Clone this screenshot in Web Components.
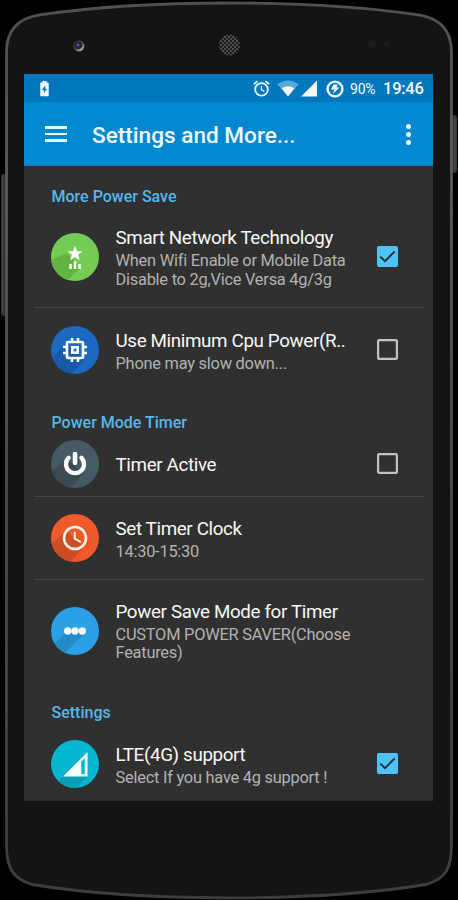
<!DOCTYPE html>
<html lang="en">
<head>
<meta charset="utf-8">
<title>Settings and More</title>
<style>
html,body{margin:0;padding:0;background:#000;width:458px;height:900px;overflow:hidden;font-family:Roboto,"Liberation Sans",sans-serif}
</style>
</head>
<body>
<phone-shell>
  <status-bar></status-bar>
  <app-bar>Settings and More...</app-bar>
  <section-title style="height:41px;--pt:10px">More Power Save</section-title>
  <setting-row icon="network" check="on" line="1" style="height:101px"><span>Smart Network Technology</span><span slot="sum">When Wifi Enable or Mobile Data<br>Disable to 2g,Vice Versa 4g/3g</span></setting-row>
  <setting-row icon="cpu" check="off" style="height:84px"><span>Use Minimum Cpu Power(R..</span><span slot="sum">Phone may slow down...</span></setting-row>
  <section-title style="height:40px;--pt:10px">Power Mode Timer</section-title>
  <setting-row icon="power" check="off" line="1" style="height:65px"><span>Timer Active</span></setting-row>
  <setting-row icon="clock" line="1" style="height:83px"><span>Set Timer Clock</span><span slot="sum">14:30-15:30</span></setting-row>
  <setting-row icon="dots" style="height:101px"><span>Power Save Mode for Timer</span><span slot="sum">CUSTOM POWER SAVER(Choose<br>Features)</span></setting-row>
  <section-title style="height:45px;--pt:11px">Settings</section-title>
  <setting-row icon="lte" check="on" style="height:76px"><span>LTE(4G) support</span><span slot="sum">Select If you have 4g support !</span></setting-row>
</phone-shell>
<script>
const define = (name, html) => customElements.define(name, class extends HTMLElement {
  connectedCallback() {
    if (this.shadowRoot) return;
    const root = this.attachShadow({ mode: 'open' });
    root.innerHTML = typeof html === 'function' ? html(this) : html;
  }
});

const body = 'M6.5 170V52C6.5 32 17 19 38 15.2C96 6.500 160 3 229 3C298 3 362 6.500 420 15.200C441 19 451.500 32 451.500 52V845C451.500 868 446 879 426 884.500C368 894 300 897.800 229 897.800C158 897.800 90 894 32 884.500C13 879 6.500 868 6.500 845Z';

define('phone-shell', `<style>
:host{display:block;position:relative;width:458px;height:900px;box-sizing:border-box;padding:74px 25px 99px 24px}
.frame{position:absolute;inset:0}
.screen{position:relative;width:409px;height:727px;background:#303030;overflow:hidden;display:flex;flex-direction:column}
::slotted(*){flex:none}
</style>
<svg class="frame" width="458" height="900" viewBox="0 0 458 900">
<defs>
<pattern id="g" width="4" height="4" patternUnits="userSpaceOnUse"><rect width="4" height="4" fill="#1c1c1c"/><circle cx="1" cy="1" r="1.050" fill="#575757"/><circle cx="3" cy="3" r="1.050" fill="#575757"/></pattern>
<linearGradient id="e" x2="0" y2="1"><stop offset="0" stop-color="#505050"/><stop offset=".2" stop-color="#5a5a5a"/><stop offset=".6" stop-color="#484848"/><stop offset="1" stop-color="#3e3e3e"/></linearGradient>
<radialGradient id="c" cx=".65" cy=".7"><stop offset="0" stop-color="#bbb"/><stop offset="1" stop-color="#555"/></radialGradient>
</defs>
<rect x="1" y="174" width="5" height="142" rx="2" fill="#303030"/><rect x="2" y="176" width="1.500" height="138" fill="#454545"/>
<rect x="452" y="115" width="5" height="58" rx="2" fill="#333"/><rect x="454" y="117" width="1.500" height="54" fill="#484848"/>
<path d="${body}" fill="#141414" stroke="url(#e)" stroke-width="2.800"/>
<circle cx="79" cy="46" r="5.500" fill="url(#c)"/><circle cx="78.300" cy="45.300" r="4" fill="#22203a"/><circle cx="78" cy="45" r="1.500" fill="#5a58a0"/>
<circle cx="229.500" cy="45" r="10.500" fill="url(#g)"/>
<circle cx="372" cy="44" r="4" fill="#1d1b1b"/><circle cx="386.500" cy="44" r="2.500" fill="#221d1d"/>
</svg>
<div class="screen"><slot></slot></div>`);

define('status-bar', `<style>
:host{display:flex;align-items:center;height:28px;background:#0277bd;color:#f4fbff;box-sizing:border-box;padding:1px 9px 0 16px}
svg{display:block;flex:none}
.sp{flex:1}
.p{font-size:14px;line-height:28px;width:25px;margin-left:6px;white-space:nowrap;letter-spacing:-.200px}
.t{font-size:16.500px;font-weight:500;line-height:28px;width:41px;margin-left:8px;white-space:nowrap;letter-spacing:-.250px}
</style>
<svg width="9" height="16" viewBox="0 0 9 16"><path fill="#f4fbff" d="M2.500 0h4v1.500H8q.7 0 .7.700v12.300q0 .8-.7.800H1.100q-.8 0-.8-.8V2.200q0-.7.800-.7h1.400z"/><path fill="#0277bd" d="M5.300 4.300 1.900 9h1.900v3.300L7 7.800H5.300z"/></svg>
<span class="sp"></span>
<svg width="17" height="17" viewBox="0 0 17 17" fill="none" stroke="#f4fbff"><circle cx="8.500" cy="9.400" r="6.300" stroke-width="1.800"/><path stroke-width="1.600" d="M.9 4.100 4.500 1.100M16.100 4.100 12.500 1.100"/><path stroke-width="1.300" d="M8.400 5.700V9.700l2.900 1.800"/></svg>
<svg style="margin-left:7px" width="22" height="17" viewBox="0 0 22 17"><path fill="#58aadb" d="M.3 4.200Q11-3.400 21.700 4.200L11 16.500z"/><path fill="#f4fbff" d="M4.700 8.200Q11 4.500 17.300 8.200L11 16.500z"/></svg>
<svg style="margin-left:2px" width="17" height="17" viewBox="0 0 17 17"><path fill="#f4fbff" d="M16 .5V16.500H0z"/></svg>
<svg style="margin-left:8px" width="18" height="18" viewBox="0 0 18 18"><circle cx="9" cy="9" r="7.400" fill="none" stroke="#f4fbff" stroke-width="2.400"/><path fill="#f4fbff" d="M7.500 4.500h4.200L10.500 7.500h3L6.900 13.900l1.500-4.300H4.900z"/></svg>
<span class="p">90%</span><span class="t">19:46</span>`);

define('app-bar', `<style>
:host{display:flex;align-items:center;height:64px;background:#0288d1;color:#eefaff;box-sizing:border-box;padding:0 22px 0 21px}
.m{display:grid;gap:4px;width:22px}.m i{height:2.500px;background:#e8f9ff}
.t{flex:1;margin-left:25px;padding-top:3px;font-size:22.600px;font-weight:500;line-height:28px;white-space:nowrap}
.d{display:grid;gap:3px}.d i{width:5px;height:5px;border-radius:50%;background:#f0fbff}
</style><div class="m"><i></i><i></i><i></i></div><div class="t"><slot></slot></div><div class="d"><i></i><i></i><i></i></div>`);

define('section-title', `<style>
:host{display:block;box-sizing:border-box;padding:var(--pt) 0 0 27.500px;color:#56b7ea;font-size:16px;font-weight:500}
div{height:20px;line-height:20px;padding-top:10.500px;white-space:nowrap}
</style><div><slot></slot></div>`);

define('check-box', el => `<style>
:host{display:block;width:21px;height:21px;margin-bottom:1px}svg{display:block}
</style><svg width="21" height="21" viewBox="0 0 21 21">${el.getAttribute('state') === 'on'
  ? '<rect width="21" height="21" rx="2" fill="#4fc3f7"/><path d="M3.300 10.600 8 15.200 17.700 5.400" fill="none" stroke="#23323b" stroke-width="2"/>'
  : '<rect x="1.100" y="1.100" width="18.800" height="18.800" rx="1" fill="none" stroke="#c2c2c2" stroke-width="2.200"/>'}</svg>`);

/* Each glyph: disc colour, long-shadow colour, shadow shape, foreground markup. */
const W = '#fafffa';
const glyphs = {
  network: ['#75cc55', '#62b344', 'M16 20 30 35 14 49-6 30z', `<path fill="${W}" d="M24 12.500 26 18.200 31.500 18.300 27.200 21.700 28.800 27.300 24 24.200 19.200 27.300 20.800 21.700 16.500 18.300 22 18.200z"/><path stroke="${W}" stroke-width="2.600" d="M19.500 36V31M24 36V28.300M28.500 36V31"/>`],
  cpu: ['#1c69c2', '#185aa9', 'M14 18 34 34 20 48-6 40z', `<g fill="none" stroke="#fff"><rect x="16" y="16" width="16" height="16" rx="1" stroke-width="2.700"/><rect x="21.300" y="21.300" width="5.400" height="5.400" stroke-width="2.600"/><path stroke-width="2.600" d="M21 12v4M27 12v4M21 32v4M27 32v4M12 21h4M12 27h4M32 21h4M32 27h4"/></g>`],
  power: ['#465a65', '#3a4a53', 'M15 19 33 33 19 48-6 37z', `<path d="M17.600 17.800A9 9 0 1 0 30.400 17.800" fill="none" stroke="#fff" stroke-width="4.300" stroke-linecap="round"/><path d="M24 14v9" stroke="#fff" stroke-width="4.600" stroke-linecap="round"/>`],
  clock: ['#ee5a2c', '#cc4c24', 'M15 17 33 33 19 48-6 36z', `<circle cx="24" cy="24" r="11" fill="none" stroke="#fff1e4" stroke-width="2.600"/><path d="M23.700 17.800V24.700L29.800 28.200" fill="none" stroke="#fff1e4" stroke-width="2"/>`],
  dots: ['#2aa0e6', '#238bc9', 'M14 26 34 26 12 48-6 46z', `<g fill="#f4fcff"><circle cx="16.700" cy="24" r="3.700"/><circle cx="24" cy="24" r="3.700"/><circle cx="31.300" cy="24" r="3.700"/></g>`],
  lte: ['#04b6cf', '#0a9db5', 'M12 36H37L24 49H0z', `<path fill="#f1fff8" fill-rule="evenodd" d="M36.500 12V36.500H12zM30.300 21.500V34H33.800V18.200z"/>`]
};
define('disc-icon', el => {
  const [bg, sh, sp, fg] = glyphs[el.getAttribute('name')];
  return `<style>:host{display:block;width:48px;height:48px}svg{display:block}</style>
<svg width="48" height="48" viewBox="0 0 48 48"><defs><clipPath id="k"><circle cx="24" cy="24" r="24"/></clipPath></defs><g clip-path="url(#k)"><rect width="48" height="48" fill="${bg}"/><path d="${sp}" fill="${sh}"/></g>${fg}</svg>`;
});

define('setting-row', el => `<style>
:host{display:flex;flex-direction:column;box-sizing:border-box;padding:0 9px 0 10px}
.r{flex:1;display:flex;align-items:center;padding:0 26px 0 17px}
.x{flex:1;margin-left:16.500px;padding-top:1.500px;white-space:nowrap;width:0;min-width:0}
.t{font-size:18.800px;line-height:24px;color:#f8f8f8;letter-spacing:-.360px}
.s{display:block;font-size:16.400px;line-height:18.500px;color:#b2b2b2;margin-top:2px;letter-spacing:-.240px}
.l{height:1px;background:#464646}
</style><div class="r"><disc-icon name="${el.getAttribute('icon')}"></disc-icon>
<div class="x"><div class="t"><slot></slot></div>${el.querySelector('[slot=sum]') ? '<div class="s"><slot name="sum"></slot></div>' : ''}</div>
${el.hasAttribute('check') ? `<check-box state="${el.getAttribute('check')}"></check-box>` : ''}</div>${el.hasAttribute('line') ? '<div class="l"></div>' : ''}`);
</script>
</body>
</html>
